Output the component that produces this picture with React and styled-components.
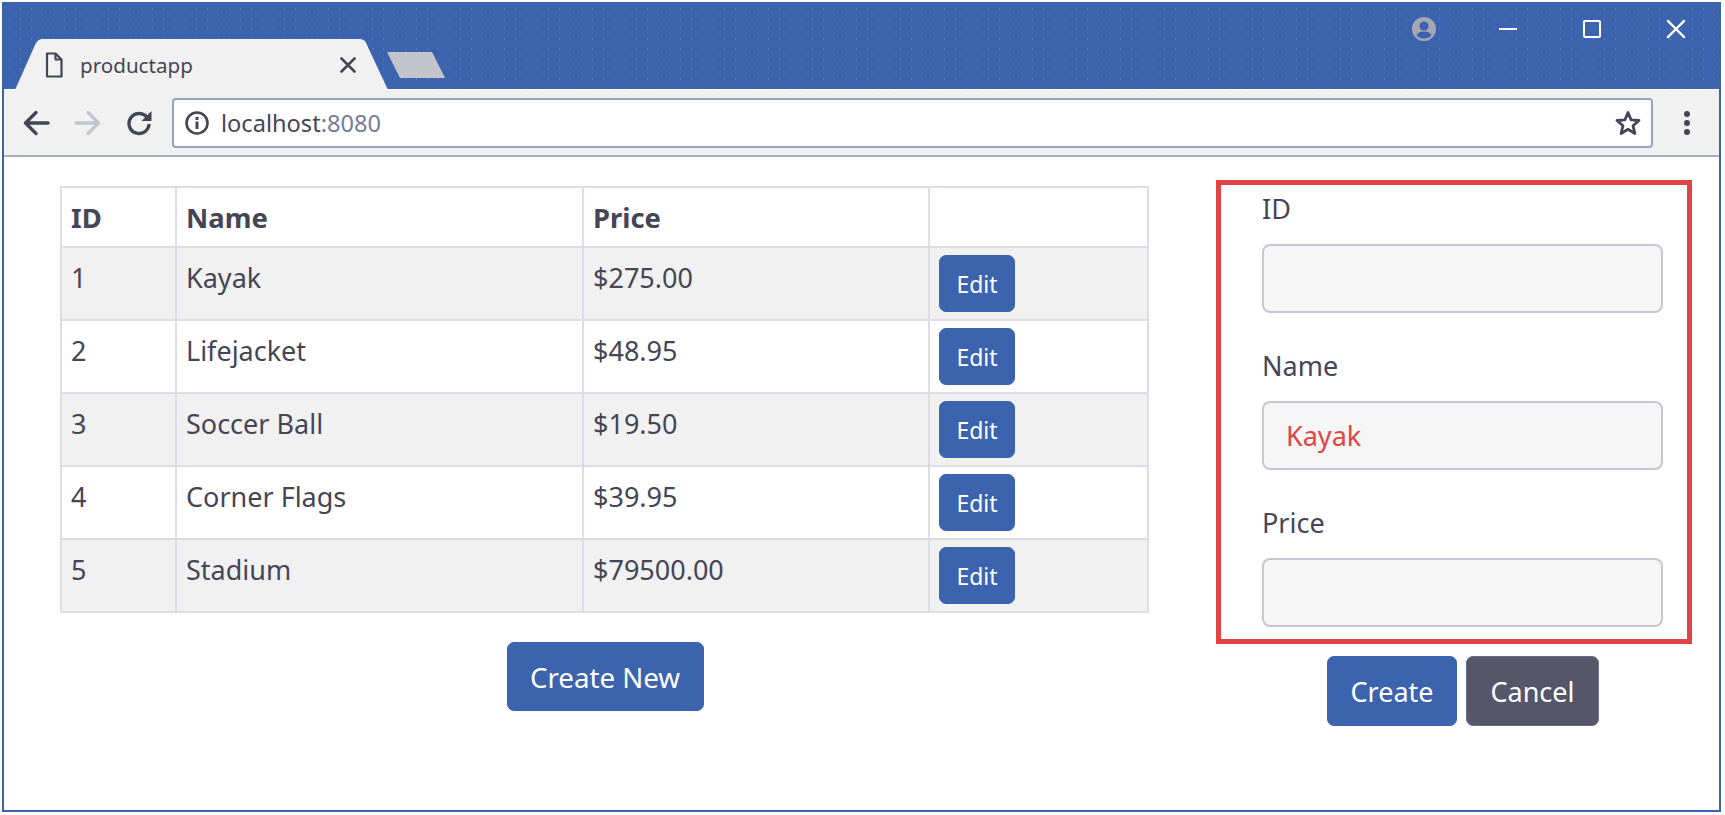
import React from "react";
import styled, { createGlobalStyle } from "styled-components";

const blue = "#3c64ae";
const ink = "#454556";

const GlobalStyle = createGlobalStyle`
  html, body {
    margin: 0;
    background: #fff;
    font-family: "Noto Sans", "Open Sans", sans-serif;
    color: ${ink};
  }
  * {
    box-sizing: border-box;
  }
`;

const Page = styled.div`
  width: 1725px;
  height: 815px;
  padding: 2px 4px 3px 2px;
`;

const Window = styled.div`
  height: 100%;
  border: 2px solid ${blue};
  display: flex;
  flex-direction: column;
`;

const TitleBar = styled.div`
  height: 85px;
  flex: none;
  background-color: ${blue};
  background-image: radial-gradient(rgba(255, 255, 255, 0.14) 0.6px, transparent 0.8px);
  background-size: 11px 10px;
  display: flex;
  align-items: flex-end;
  padding-left: 11px;
`;

const Tab = styled.div`
  width: 373px;
  height: 51px;
  margin-bottom: -1px;
  background: #f1f1f1;
  clip-path: path("M0 51 L20 6 C22 2 24 0 28 0 L344 0 C348 0 351 2 352 6 L373 51 Z");
  display: flex;
  align-items: center;
  padding: 0 32px 0 30px;
  position: relative;
  z-index: 1;
`;

const TabTitle = styled.span`
  margin-left: 17px;
  font-size: 20.6px;
  flex: 1;
`;

const NewTab = styled.div`
  width: 58px;
  height: 26px;
  margin: 0 0 11px -1px;
  background: #c4c5cc;
  clip-path: polygon(0 0, 45px 0, 58px 26px, 13px 26px);
`;

const Controls = styled.div`
  margin-left: auto;
  align-self: flex-start;
  display: flex;
  align-items: center;
  height: 50px;
  padding-right: 1px;
`;

const Avatar = styled.div`
  display: flex;
  margin-right: 30px;
`;

const ControlCell = styled.div`
  width: 84px;
  display: flex;
  justify-content: center;
`;

const Toolbar = styled.div`
  height: 68px;
  flex: none;
  background: #f1f1f1;
  border-top: 1px solid #fff;
  border-bottom: 2px solid #a9adbf;
  display: flex;
  align-items: center;
  padding-left: 7px;
`;

const NavSlot = styled.div`
  width: 51px;
  display: flex;
  justify-content: center;
`;

const UrlBar = styled.div`
  width: 1481px;
  height: 50px;
  margin-left: 8px;
  background: #fff;
  border: 2px solid #98a3c3;
  border-radius: 4px;
  display: flex;
  align-items: center;
  padding: 0 10px;
`;

const Address = styled.span`
  margin-left: 11px;
  font-size: 23.6px;
  flex: 1;
`;

const Port = styled.span`
  color: #757c99;
`;

const MenuSlot = styled.div`
  flex: 1;
  display: flex;
  justify-content: center;
  padding-left: 2px;
`;

const Content = styled.div`
  flex: 1;
  display: flex;
  align-items: flex-start;
  background: #fff;
`;

const ListPane = styled.div`
  width: 1145px;
  padding: 29px 0 0 57px;
  display: flex;
  flex-direction: column;
  align-items: center;
`;

const Table = styled.table`
  width: 1087px;
  margin-right: 1px;
  table-layout: fixed;
  border-collapse: collapse;
  font-size: 27px;
  line-height: 39px;
`;

const HeadCell = styled.th`
  width: ${(p) => p.$width}px;
  border: 2px solid #dcdde6;
  padding: 10px 9px 9px;
  text-align: left;
  font-size: 27.4px;
  font-weight: 700;
`;

const Row = styled.tr`
  background: ${(p) => (p.$odd ? "#f1f1f1" : "#fff")};
`;

const Cell = styled.td`
  border: 2px solid #dcdde6;
  padding: 10px 9px 0;
  vertical-align: top;
`;

const ButtonCell = styled.td`
  border: 2px solid #dcdde6;
  padding: 7px 9px 7px;
  vertical-align: top;
`;

const Button = styled.button`
  display: block;
  width: ${(p) => p.$width}px;
  height: ${(p) => p.$height}px;
  padding: 0;
  border: 1px solid ${(p) => (p.$dark ? "#6d6e80" : blue)};
  border-radius: 7px;
  background: ${(p) => (p.$dark ? "#55566a" : blue)};
  color: #fff;
  font-family: inherit;
  font-size: ${(p) => p.$size}px;
`;

const CreateRow = styled.div`
  margin-top: 29px;
`;

const FormPane = styled.div`
  width: 476px;
  margin: 23px 0 0 67px;
`;

const FormBox = styled.div`
  height: 464px;
  border: 5px solid #e04545;
  padding: 5px 24px 12px 41px;
`;

const Field = styled.div`
  margin-bottom: 34px;
  &:last-child {
    margin-bottom: 0;
  }
`;

const Label = styled.label`
  display: block;
  font-size: 27px;
  line-height: 37px;
  margin-bottom: 17px;
`;

const Input = styled.input`
  display: block;
  width: 401px;
  height: 69px;
  border: 2px solid #c6c7d2;
  border-radius: 8px;
  background: #f6f6f6;
  padding: 0 22px;
  font-family: inherit;
  font-size: 27px;
  color: #e04545;
  outline: none;
`;

const FormButtons = styled.div`
  display: flex;
  gap: 9px;
  margin: 12px 0 0 111px;
`;

const IconFile = () => (
  <svg width="18" height="26" viewBox="0 0 18 26" fill="none" stroke={ink} strokeWidth="2.2" strokeLinejoin="round">
    <path d="M2 1.5h8.5L16.500 7.500V24.500H2z" />
    <path d="M10.500 1.500V7.500H16.500" />
  </svg>
);

const IconX = ({ size, color, width }) => (
  <svg width={size} height={size} viewBox="0 0 16 16" fill="none" stroke={color} strokeWidth={width} strokeLinecap="round">
    <path d="M1.500 1.500L14.500 14.500M14.500 1.500L1.500 14.500" />
  </svg>
);

const IconAvatar = () => (
  <svg width="24" height="24" viewBox="0 0 24 24">
    <circle cx="12" cy="12" r="12" fill="#a5a7b5" />
    <circle cx="12" cy="9" r="4.500" fill={blue} />
    <path d="M4.500 18.500C6 15 9 14.500 12 14.500S18 15 19.500 18.500C17.500 20.500 15 21.500 12 21.500S6.500 20.500 4.500 18.500z" fill={blue} />
  </svg>
);

const IconMinimize = () => (
  <svg width="18" height="4" viewBox="0 0 18 4">
    <path d="M0 2H18" stroke="#fff" strokeWidth="2" />
  </svg>
);

const IconMaximize = () => (
  <svg width="18" height="18" viewBox="0 0 18 18">
    <rect x="1" y="1" width="16" height="16" rx="1" fill="none" stroke="#fff" strokeWidth="2" />
  </svg>
);

const IconArrow = ({ color, flip }) => (
  <svg width="27" height="26" viewBox="0 0 27 26" fill="none" stroke={color} strokeWidth="3.400" strokeLinecap="round" strokeLinejoin="round" transform={flip ? "scale(-1 1)" : undefined}>
    <path d="M25 13H3M13 2.500L2.500 13L13 23.500" />
  </svg>
);

const IconReload = () => (
  <svg width="26" height="26" viewBox="0 0 26 26">
    <path d="M21 7.500A10 10 0 1 0 23 14" fill="none" stroke={ink} strokeWidth="3.400" />
    <path d="M25.500 1V11H15.500z" fill={ink} />
  </svg>
);

const IconInfo = () => (
  <svg width="26" height="24" viewBox="0 0 26 24">
    <circle cx="13" cy="12" r="10.500" fill="none" stroke={ink} strokeWidth="2.600" />
    <rect x="11.500" y="10.500" width="3" height="7.500" fill={ink} />
    <rect x="11.500" y="6" width="3" height="3" fill={ink} />
  </svg>
);

const IconStar = () => (
  <svg width="26" height="26" viewBox="0 0 26 26">
    <path d="M13 2.500L16.100 9.900L24 10.500L18 15.700L19.900 23.500L13 19.300L6.100 23.500L8 15.700L2 10.500L9.900 9.900z" fill="none" stroke={ink} strokeWidth="2.800" strokeLinejoin="round" />
  </svg>
);

const IconDots = () => (
  <svg width="8" height="26" viewBox="0 0 8 26" fill={ink}>
    <circle cx="4" cy="4" r="3" />
    <circle cx="4" cy="13" r="3" />
    <circle cx="4" cy="22" r="3" />
  </svg>
);

const products = [
  { id: 1, name: "Kayak", price: "$275.00" },
  { id: 2, name: "Lifejacket", price: "$48.95" },
  { id: 3, name: "Soccer Ball", price: "$19.50" },
  { id: 4, name: "Corner Flags", price: "$39.95" },
  { id: 5, name: "Stadium", price: "$79500.00" },
];

const fields = [
  { label: "ID", value: "" },
  { label: "Name", value: "Kayak" },
  { label: "Price", value: "" },
];

const App = () => {
  return (
    <Page>
      <GlobalStyle />
      <Window>
        <TitleBar>
          <Tab>
            <IconFile />
            <TabTitle>productapp</TabTitle>
            <IconX size={16} color={ink} width={2.6} />
          </Tab>
          <NewTab />
          <Controls>
            <Avatar>
              <IconAvatar />
            </Avatar>
            <ControlCell>
              <IconMinimize />
            </ControlCell>
            <ControlCell>
              <IconMaximize />
            </ControlCell>
            <ControlCell>
              <IconX size={20} color="#fff" width={1.8} />
            </ControlCell>
          </Controls>
        </TitleBar>
        <Toolbar>
          <NavSlot>
            <IconArrow color={ink} />
          </NavSlot>
          <NavSlot>
            <IconArrow color="#c4c5cf" flip />
          </NavSlot>
          <NavSlot>
            <IconReload />
          </NavSlot>
          <UrlBar>
            <IconInfo />
            <Address>
              localhost<Port>:8080</Port>
            </Address>
            <IconStar />
          </UrlBar>
          <MenuSlot>
            <IconDots />
          </MenuSlot>
        </Toolbar>
        <Content>
          <ListPane>
            <Table>
              <thead>
                <tr>
                  <HeadCell $width={115}>ID</HeadCell>
                  <HeadCell $width={407}>Name</HeadCell>
                  <HeadCell $width={346}>Price</HeadCell>
                  <HeadCell $width={219} />
                </tr>
              </thead>
              <tbody>
                {products.map((p, i) => (
                  <Row key={p.id} $odd={i % 2 === 0}>
                    <Cell>{p.id}</Cell>
                    <Cell>{p.name}</Cell>
                    <Cell>{p.price}</Cell>
                    <ButtonCell>
                      <Button $width={76} $height={57} $size={23}>
                        Edit
                      </Button>
                    </ButtonCell>
                  </Row>
                ))}
              </tbody>
            </Table>
            <CreateRow>
              <Button $width={197} $height={69} $size={27.7}>
                Create New
              </Button>
            </CreateRow>
          </ListPane>
          <FormPane>
            <FormBox>
              {fields.map((f) => (
                <Field key={f.label}>
                  <Label>{f.label}</Label>
                  <Input defaultValue={f.value} />
                </Field>
              ))}
            </FormBox>
            <FormButtons>
              <Button $width={130} $height={70} $size={27}>
                Create
              </Button>
              <Button $dark $width={133} $height={70} $size={27}>
                Cancel
              </Button>
            </FormButtons>
          </FormPane>
        </Content>
      </Window>
    </Page>
  );
};

export default App;
